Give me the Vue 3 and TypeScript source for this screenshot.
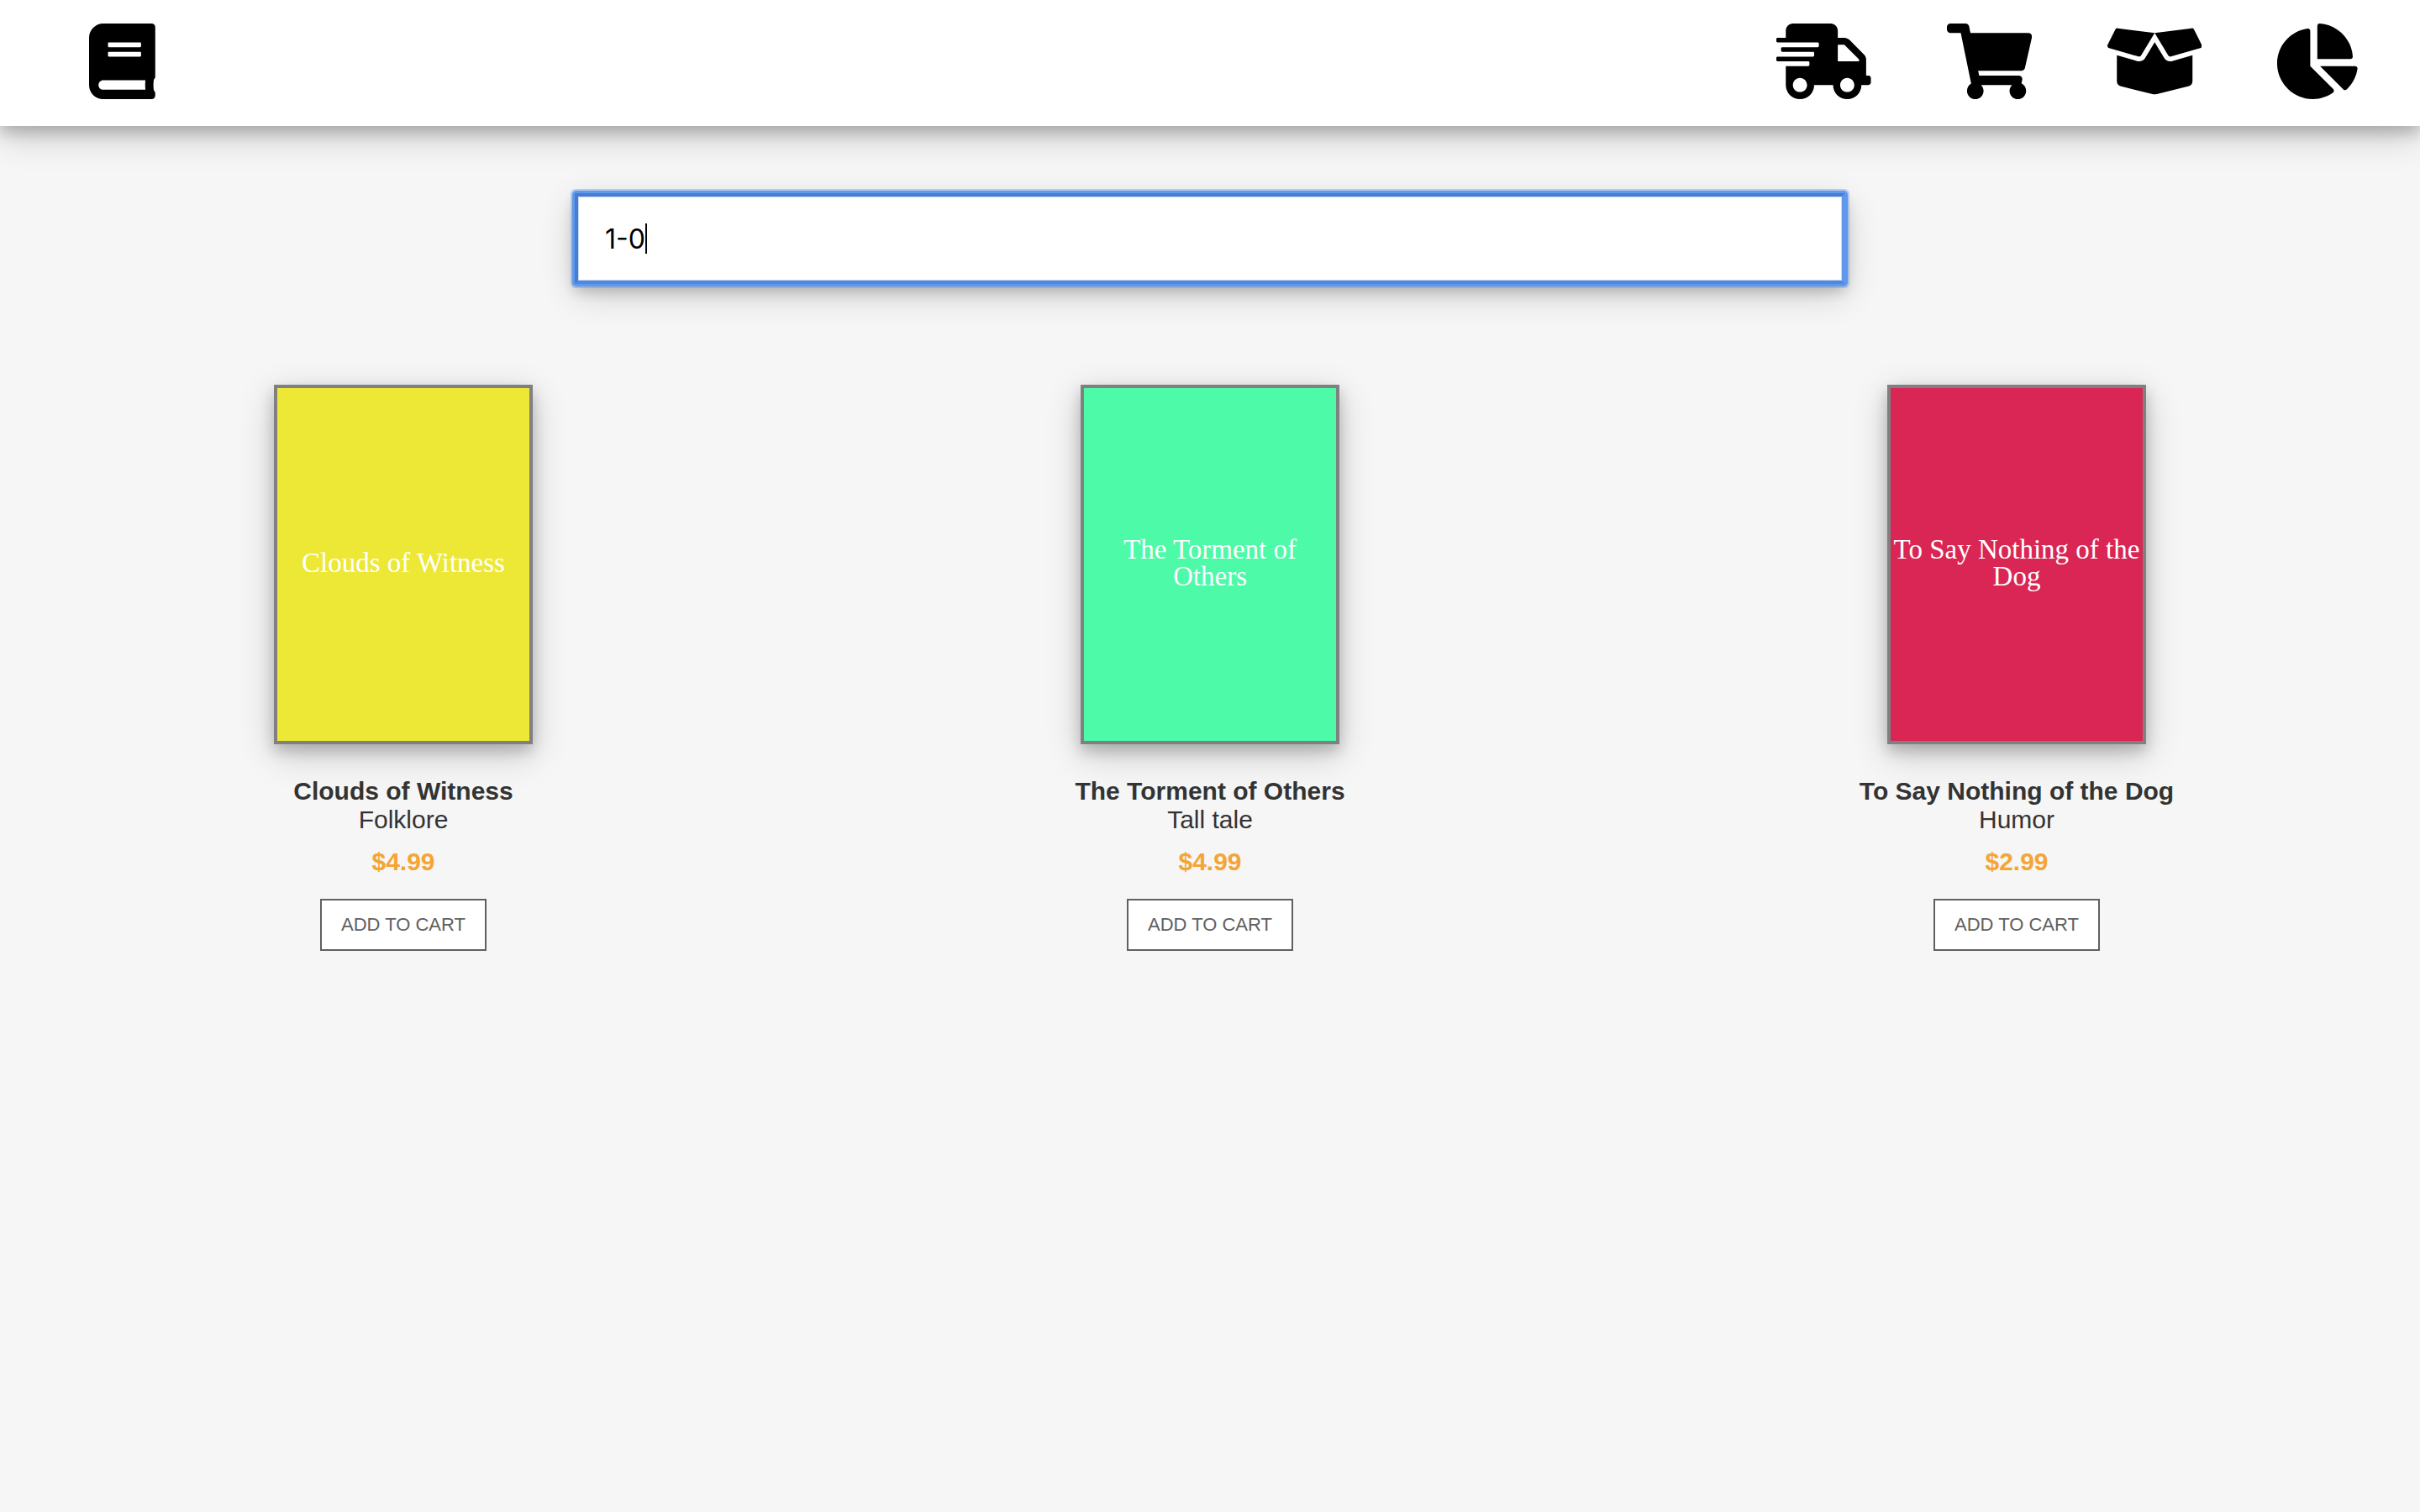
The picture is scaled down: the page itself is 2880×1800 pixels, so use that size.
<script setup lang="ts">
import { ref } from 'vue'

interface Icon {
  label: string
  width: number
  path: string
}

interface Book {
  title: string
  genre: string
  price: string
  color: string
}

const home: Icon = {
  label: 'Books',
  width: 448,
  path: 'M448 360V24c0-13.300-10.700-24-24-24H96C43 0 0 43 0 96v320c0 53 43 96 96 96h328c13.300 0 24-10.700 24-24v-16c0-7.500-3.500-14.300-8.900-18.700-4.200-15.400-4.200-59.300 0-74.700 5.400-4.300 8.900-11.100 8.900-18.600zM128 134c0-3.300 2.700-6 6-6h212c3.300 0 6 2.700 6 6v20c0 3.300-2.700 6-6 6H134c-3.300 0-6-2.700-6-6v-20zm0 64c0-3.300 2.700-6 6-6h212c3.300 0 6 2.700 6 6v20c0 3.300-2.700 6-6 6H134c-3.300 0-6-2.700-6-6v-20zm253.400 250H96c-17.700 0-32-14.300-32-32 0-17.600 14.400-32 32-32h285.400c-1.900 17.100-1.900 46.900 0 64z',
}

const links: Icon[] = [
  {
    label: 'Shipping',
    width: 640,
    path: 'M624 352h-16V243.900c0-12.700-5.100-24.900-14.100-33.900L494 110.100c-9-9-21.200-14.100-33.900-14.100H416V48c0-26.500-21.500-48-48-48H112C85.500 0 64 21.500 64 48v48H8c-4.400 0-8 3.600-8 8v16c0 4.400 3.600 8 8 8h272c4.400 0 8 3.600 8 8v16c0 4.400-3.600 8-8 8H40c-4.400 0-8 3.600-8 8v16c0 4.400 3.600 8 8 8h208c4.400 0 8 3.600 8 8v16c0 4.400-3.600 8-8 8H8c-4.400 0-8 3.600-8 8v16c0 4.400 3.600 8 8 8h208c4.400 0 8 3.600 8 8v16c0 4.400-3.600 8-8 8H64v128c0 53 43 96 96 96s96-43 96-96h128c0 53 43 96 96 96s96-43 96-96h48c8.800 0 16-7.200 16-16v-32c0-8.800-7.200-16-16-16zM160 464c-26.500 0-48-21.500-48-48s21.500-48 48-48 48 21.500 48 48-21.500 48-48 48zm320 0c-26.500 0-48-21.500-48-48s21.500-48 48-48 48 21.500 48 48-21.500 48-48 48zm80-208H416V144h44.100l99.900 99.900V256z',
  },
  {
    label: 'Cart',
    width: 576,
    path: 'M528.120 301.319l47.273-208C578.806 78.301 567.391 64 551.990 64H159.208l-9.166-44.810C147.758 8.021 137.930 0 126.529 0H24C10.745 0 0 10.745 0 24v16c0 13.255 10.745 24 24 24h69.883l70.248 343.435C147.325 417.100 136 435.222 136 456c0 30.928 25.072 56 56 56s56-25.072 56-56c0-15.674-6.447-29.835-16.824-40h209.647C430.447 426.165 424 440.326 424 456c0 30.928 25.072 56 56 56s56-25.072 56-56c0-22.172-12.888-41.332-31.579-50.405l5.517-24.276c3.413-15.018-8.002-29.319-23.403-29.319H218.117l-6.545-32h293.145c11.206 0 20.920-7.754 23.403-18.681z',
  },
  {
    label: 'Inventory',
    width: 640,
    path: 'M425.700 256c-16.900 0-32.800-9-41.400-23.400L320 126l-64.200 106.600c-8.700 14.500-24.600 23.500-41.500 23.500-4.500 0-9-.6-13.300-1.900L64 215v178c0 14.700 10 27.500 24.200 31l216.200 54.100c10.200 2.500 20.900 2.500 31 0L551.800 424c14.200-3.600 24.200-16.400 24.200-31V215l-137 39.100c-4.300 1.300-8.800 1.900-13.300 1.900zm212.600-112.200L586.800 41c-3.100-6.200-9.800-9.800-16.700-8.900L320 64l91.700 152.100c3.800 6.300 11.400 9.300 18.500 7.300l197.900-56.500c9.900-2.900 14.700-13.900 10.200-23.100zM53.200 41L1.700 143.800c-4.600 9.200.3 20.200 10.100 23l197.900 56.500c7.100 2 14.700-1 18.500-7.300L320 64 69.800 32.100c-6.900-.8-13.500 2.700-16.600 8.900z',
  },
  {
    label: 'Reports',
    width: 544,
    path: 'M527.790 288H290.500l158.030 158.030c6.040 6.040 15.980 6.530 22.190.68 38.700-36.460 65.320-85.610 73.130-140.860 1.340-9.460-6.510-17.850-16.060-17.850zm-15.830-64.800C503.720 103.740 408.260 8.280 288.800.04 279.680-.59 272 7.100 272 16.240V240h223.770c9.140 0 16.820-7.680 16.190-16.800zM224 288V50.710c0-9.550-8.390-17.400-17.840-16.060C86.990 51.490-4.100 155.600.14 280.370 4.500 408.510 114.830 513.590 243.030 511.980c50.400-.63 96.970-16.870 135.260-44.030 7.900-5.600 8.420-17.230 1.570-24.080L224 288z',
  },
]

const query = ref('1-0')

const books: Book[] = [
  { title: 'Clouds of Witness', genre: 'Folklore', price: '$4.99', color: '#ede836' },
  { title: 'The Torment of Others', genre: 'Tall tale', price: '$4.99', color: '#4dfaa8' },
  { title: 'To Say Nothing of the Dog', genre: 'Humor', price: '$2.99', color: '#d92654' },
]
</script>

<template>
  <header class="topbar">
    <a class="icon-link" href="#" :aria-label="home.label">
      <svg class="icon" :viewBox="`0 0 ${home.width} 512`"><path :d="home.path" /></svg>
    </a>
    <nav class="links">
      <a v-for="link in links" :key="link.label" class="icon-link" href="#" :aria-label="link.label">
        <svg class="icon" :viewBox="`0 0 ${link.width} 512`"><path :d="link.path" /></svg>
      </a>
    </nav>
  </header>

  <main>
    <div class="search">
      <input v-model="query" class="search-input" type="text" aria-label="Search books" />
      <span class="caret"></span>
    </div>

    <section class="books">
      <article v-for="book in books" :key="book.title" class="book">
        <div class="cover" :style="{ backgroundColor: book.color }">{{ book.title }}</div>
        <h2 class="title">{{ book.title }}</h2>
        <p class="genre">{{ book.genre }}</p>
        <p class="price">{{ book.price }}</p>
        <button class="add" type="button">ADD TO CART</button>
      </article>
    </section>
  </main>
</template>

<style>
body {
  margin: 0;
  background: #f6f6f6;
}
</style>

<style scoped>
.topbar {
  display: flex;
  justify-content: space-between;
  padding: 28px 74px 32px 106px;
  background: #fff;
  box-shadow: 0 8px 16px rgba(0, 0, 0, 0.2), 0 12px 40px rgba(0, 0, 0, 0.19);
}

.links {
  display: flex;
  gap: 90px;
}

.icon-link {
  display: block;
  color: #000;
}

.icon {
  display: block;
  height: 90px;
  fill: currentColor;
}

.search {
  position: relative;
  width: 50%;
  margin: 80px auto 120px;
  padding: 0 36px;
}

.search-input {
  display: block;
  box-sizing: border-box;
  width: calc(100% + 72px);
  height: 108px;
  margin: 0 -36px;
  padding: 0 32px;
  border: 4px solid;
  border-color: #477dd0 #5f98ec #4f88dc #477dd0;
  border-radius: 2px;
  outline: none;
  background: #fff;
  box-shadow:
    inset 0 0 0 1px #c9daf5,
    0 0 0 3px #5f98ec,
    0 0 0 5px rgba(95, 152, 236, 0.4),
    0 8px 16px rgba(0, 0, 0, 0.2),
    0 12px 40px rgba(0, 0, 0, 0.19);
  color: #000;
  font-family: Inter, sans-serif;
  font-size: 32px;
}

.caret {
  position: absolute;
  top: 36px;
  left: 84px;
  width: 2px;
  height: 36px;
  background: #000;
}

.books {
  display: grid;
  grid-template-columns: repeat(3, 1fr);
}

.book {
  display: flex;
  flex-direction: column;
  align-items: center;
  color: #333;
  font-family: "Liberation Sans", Arial, sans-serif;
  font-size: 30px;
  line-height: 34px;
  text-align: center;
}

.cover {
  display: flex;
  align-items: center;
  justify-content: center;
  box-sizing: border-box;
  width: 308px;
  height: 428px;
  margin-bottom: 39px;
  padding-bottom: 4px;
  border: 4px solid #808080;
  box-shadow: 0 8px 16px rgba(0, 0, 0, 0.2), 0 12px 40px rgba(0, 0, 0, 0.19);
  color: #fff;
  font-family: Palatino, "Liberation Serif", serif;
  font-size: 33px;
  line-height: 32px;
}

.title {
  margin: 0;
  font-size: 30px;
  font-weight: 700;
}

.genre {
  margin: 0;
}

.price {
  margin: 16px 0 27px;
  color: #f4a535;
  font-weight: 700;
}

.add {
  height: 62px;
  padding: 0 23px;
  border: 2px solid #606060;
  border-radius: 0;
  background: #fff;
  color: #606060;
  font-family: "Liberation Sans", Arial, sans-serif;
  font-size: 22px;
}
</style>
